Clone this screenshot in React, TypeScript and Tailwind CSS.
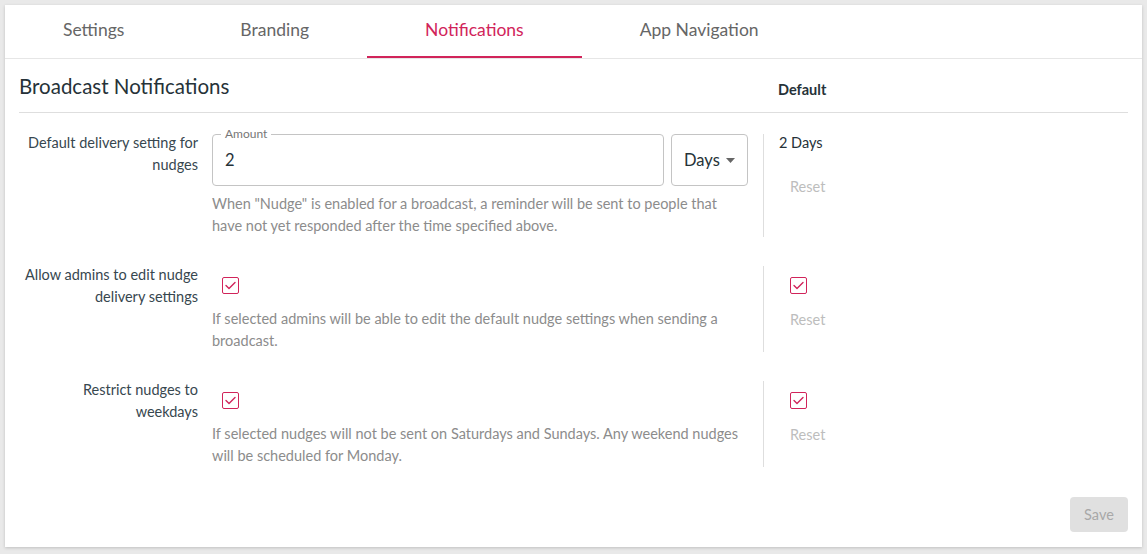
import { ReactNode } from 'react';

const tabs = ['Settings', 'Branding', 'Notifications', 'App Navigation'];

function Check() {
  return (
    <div className="w-[17px] h-[17px] rounded-[2px] border-[1.5px] border-[#d1245a] flex items-center justify-center">
      <svg width="11" height="9" viewBox="0 0 11 9" fill="none">
        <path d="M1 4.5 L4 7.5 L10 1.5" stroke="#d1245a" strokeWidth="1.4" strokeLinecap="round" strokeLinejoin="round" />
      </svg>
    </div>
  );
}

function Reset() {
  return (
    <button className="h-[30px] px-[11px] text-[14.5px] text-[#bdbdbd] leading-[30px]">Reset</button>
  );
}

interface RowProps {
  label: ReactNode;
  children: ReactNode;
  right: ReactNode;
  className?: string;
}

function Row({ label, children, right, className }: RowProps) {
  return (
    <div className={'flex ' + (className || '')}>
      <div className="w-[179px] shrink-0 text-right text-[14.5px] leading-[22px] text-[#37474f] -mt-[2px]">{label}</div>
      <div className="w-[536px] shrink-0 ml-[14px]">{children}</div>
      <div className="ml-[15px] border-l border-[#dedede] pl-[15px] flex-1">{right}</div>
    </div>
  );
}

export default function App() {
  return (
    <div className="min-h-[554px] bg-[#e9e9e9] pt-[5px] pl-[5px]" style={{ fontFamily: 'Lato, "Open Sans", sans-serif' }}>
      <div className="w-[1137px] bg-white shadow-[0_1px_3px_rgba(0,0,0,0.18)] pb-[15px]">
        {/* Tabs */}
        <div className="flex h-[54px] border-b border-[#e6e6e6]">
          {tabs.map((t) => (
            <div
              key={t}
              className={
                t === 'Notifications'
                  ? 'h-[53px] px-[58px] flex items-center border-b-2 border-[#d1245a] text-[17.5px] text-[#d1245a]'
                  : 'h-[53px] px-[58px] flex items-center border-b-2 border-transparent text-[17.5px] text-[#666666]'
              }
            >
              {t}
            </div>
          ))}
        </div>

        <div className="px-[14px]">
          {/* Header */}
          <div className="flex h-[54px] border-b border-[#dedede]">
            <h2 className="flex-1 mt-[16px] text-[20.5px] leading-[22px] text-[#263238]">Broadcast Notifications</h2>
            <div className="w-[350px] mt-[23px] text-[14.5px] leading-[16px] font-bold text-[#263238]">Default</div>
          </div>

          <Row
            className="mt-[21px]"
            label={<>Default delivery setting for<br />nudges</>}
            right={
              <div>
                <div className="text-[14.5px] leading-[18px] text-[#263238]">2 Days</div>
                <div className="mt-[20px]"><Reset /></div>
              </div>
            }
          >
            <div className="flex gap-[7px]">
              <div className="relative flex-1 h-[52px] rounded-[4px] border border-[#c4c4c4] flex items-center px-[12px]">
                <span className="absolute -top-[7px] left-[8px] px-[4px] bg-white text-[12px] leading-[12px] text-[#777777]">Amount</span>
                <span className="text-[16.5px] text-[#263238]">2</span>
              </div>
              <div className="w-[77px] h-[52px] rounded-[4px] border border-[#c4c4c4] flex items-center pl-[12px] gap-[6px] text-[16.5px] text-[#263238]">
                Days
                <svg width="9" height="5" viewBox="0 0 9 5"><path d="M0 0 L9 0 L4.5 5 Z" fill="#666" /></svg>
              </div>
            </div>
            <p className="mt-[7px] text-[14.5px] leading-[22px] text-[#8c8c8c]">
              When "Nudge" is enabled for a broadcast, a reminder will be sent to people that have not yet responded after the time specified above.
            </p>
          </Row>

          <Row
            className="mt-[29px]"
            label={<>Allow admins to edit nudge<br />delivery settings</>}
            right={
              <div className="pt-[11px] pl-[11px]">
                <Check />
                <div className="mt-[11px] -ml-[11px]"><Reset /></div>
              </div>
            }
          >
            <div className="pt-[11px] pl-[10px]"><Check /></div>
            <p className="mt-[14px] text-[14.5px] leading-[22px] text-[#8c8c8c]">
              If selected admins will be able to edit the default nudge settings when sending a broadcast.
            </p>
          </Row>

          <Row
            className="mt-[29px]"
            label={<>Restrict nudges to<br />weekdays</>}
            right={
              <div className="pt-[11px] pl-[11px]">
                <Check />
                <div className="mt-[11px] -ml-[11px]"><Reset /></div>
              </div>
            }
          >
            <div className="pt-[11px] pl-[10px]"><Check /></div>
            <p className="mt-[14px] text-[14.5px] leading-[22px] text-[#8c8c8c]">
              If selected nudges will not be sent on Saturdays and Sundays. Any weekend nudges will be scheduled for Monday.
            </p>
          </Row>

          <div className="flex justify-end mt-[30px]">
            <button className="w-[58px] h-[35px] rounded-[4px] bg-[#e0e0e0] text-[14.5px] text-[#a8a8a8]">Save</button>
          </div>
        </div>
      </div>
    </div>
  );
}
